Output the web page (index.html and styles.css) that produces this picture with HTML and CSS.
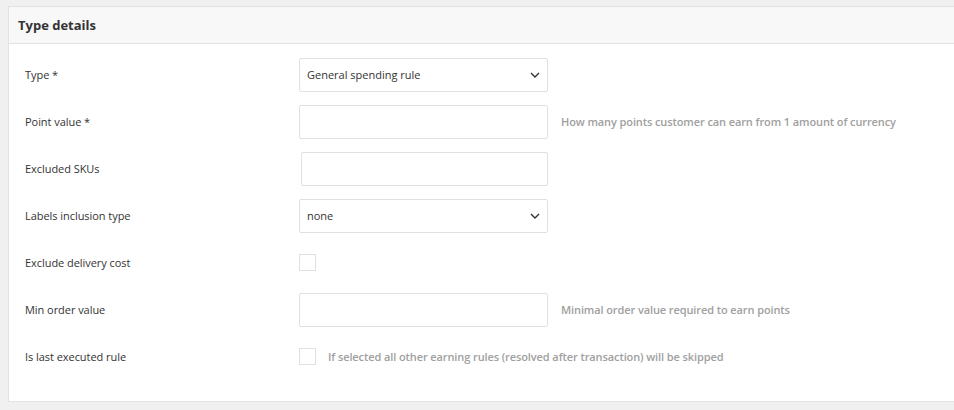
FILE: index.html
```html
<!DOCTYPE html>
<html>
<head>
<meta charset="utf-8">
<link rel="stylesheet" href="styles.css">
</head>
<body>
<div class="panel">
  <div class="panel-header">Type details</div>
  <div class="panel-body">
    <div class="row">
      <div class="label">Type *</div>
      <div class="control">
        <div class="select"><span>General spending rule</span>
          <svg class="chev" width="10" height="6" viewBox="0 0 10 6"><path d="M1 1 L5 5 L9 1" fill="none" stroke="#333" stroke-width="1.4"/></svg>
        </div>
      </div>
    </div>
    <div class="row">
      <div class="label">Point value *</div>
      <div class="control">
        <div class="input"></div>
        <div class="hint">How many points customer can earn from 1 amount of currency</div>
      </div>
    </div>
    <div class="row">
      <div class="label">Excluded SKUs</div>
      <div class="control">
        <div class="input input-shift"></div>
      </div>
    </div>
    <div class="row">
      <div class="label">Labels inclusion type</div>
      <div class="control">
        <div class="select"><span>none</span>
          <svg class="chev" width="10" height="6" viewBox="0 0 10 6"><path d="M1 1 L5 5 L9 1" fill="none" stroke="#333" stroke-width="1.4"/></svg>
        </div>
      </div>
    </div>
    <div class="row">
      <div class="label">Exclude delivery cost</div>
      <div class="control">
        <div class="checkbox"></div>
      </div>
    </div>
    <div class="row">
      <div class="label">Min order value</div>
      <div class="control">
        <div class="input"></div>
        <div class="hint">Minimal order value required to earn points</div>
      </div>
    </div>
    <div class="row">
      <div class="label">Is last executed rule</div>
      <div class="control">
        <div class="checkbox"></div>
        <div class="hint hint-check">If selected all other earning rules (resolved after transaction) will be skipped</div>
      </div>
    </div>
  </div>
</div>
</body>
</html>
```
FILE: styles.css
```css
html, body {
  margin: 0;
  padding: 0;
  background: #f0f0f0;
  font-family: "Open Sans", sans-serif;
}
body {
  padding: 6px 0 0 8px;
  height: 410px;
  box-sizing: border-box;
}
.panel {
  background: #fff;
  border: 1px solid #e2e2e2;
  border-right: none;
}
.panel-header {
  background: #f8f8f8;
  border-bottom: 1px solid #e2e2e2;
  height: 36px;
  padding-left: 9px;
  display: flex;
  align-items: center;
  font-size: 13px;
  font-weight: 700;
  color: #333;
}
.panel-body {
  padding: 7px 0 21px 16px;
}
.row {
  display: flex;
  align-items: center;
  height: 47px;
}
.label {
  width: 274px;
  font-size: 11px;
  color: #333;
  letter-spacing: -0.05px;
}
.control {
  display: flex;
  align-items: center;
}
.select, .input {
  width: 249px;
  height: 34px;
  box-sizing: border-box;
  border: 1px solid #e0e0e0;
  border-radius: 2px;
  background: #fff;
}
.select {
  display: flex;
  align-items: center;
  justify-content: space-between;
  padding: 0 7px 0 7px;
  font-size: 11px;
  color: #333;
}
.chev {
  display: block;
}
.input-shift {
  width: 247px;
  margin-left: 2px;
}
.hint {
  margin-left: 13px;
  font-size: 11px;
  font-weight: 600;
  color: #a0a0a0;
  letter-spacing: -0.1px;
}
.checkbox {
  width: 17px;
  height: 17px;
  box-sizing: border-box;
  border: 1px solid #e0e0e0;
  background: #fff;
}
.hint-check {
  margin-left: 12px;
}
```
